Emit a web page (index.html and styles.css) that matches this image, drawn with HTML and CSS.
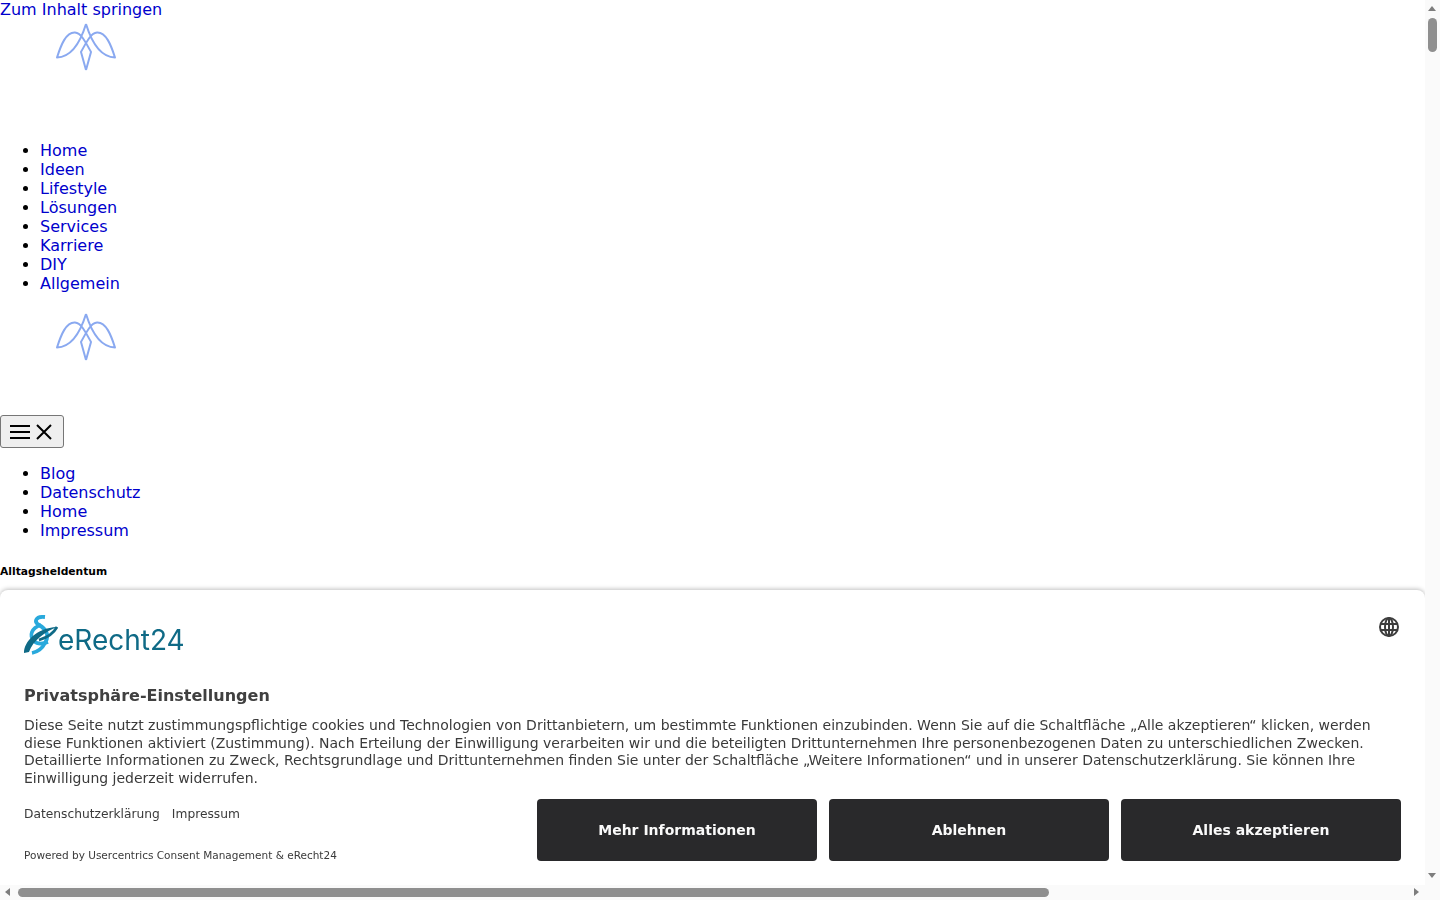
FILE: index.html
```html
<!DOCTYPE html>
<html lang="de">
<head>
    <meta charset="UTF-8">
    <meta name="viewport" content="width=device-width, initial-scale=1.0">
    <title>Alltagsheldentum</title>
    <link rel="stylesheet" href="styles.css">
</head>
<body>
    <a class="skip-link" href="#inhalt">Zum Inhalt springen</a>

    <a class="site-logo" href="#">
        <svg width="172" height="106" viewBox="0 0 172 106" fill="none" stroke="#8aa9f0" stroke-width="2" stroke-linejoin="round">
            <path d="M86 5 C82 18 74 38 57 38.5 C61 26 66 13 75 13.5 C81 14 85 22 91 33 L86 51"/>
            <path d="M86 5 C90 18 98 38 115 38.5 C111 26 106 13 97 13.5 C91 14 87 22 81 33 L86 51"/>
        </svg>
    </a>

    <ul>
        <li><a href="#">Home</a></li>
        <li><a href="#">Ideen</a></li>
        <li><a href="#">Lifestyle</a></li>
        <li><a href="#">Lösungen</a></li>
        <li><a href="#">Services</a></li>
        <li><a href="#">Karriere</a></li>
        <li><a href="#">DIY</a></li>
        <li><a href="#">Allgemein</a></li>
    </ul>

    <a class="site-logo" href="#">
        <svg width="172" height="106" viewBox="0 0 172 106" fill="none" stroke="#8aa9f0" stroke-width="2" stroke-linejoin="round">
            <path d="M86 5 C82 18 74 38 57 38.5 C61 26 66 13 75 13.5 C81 14 85 22 91 33 L86 51"/>
            <path d="M86 5 C90 18 98 38 115 38.5 C111 26 106 13 97 13.5 C91 14 87 22 81 33 L86 51"/>
        </svg>
    </a>

    <button class="menu-toggle" aria-label="Menü">
        <svg width="22" height="16" viewBox="0 0 22 16" stroke="#000" stroke-width="2">
            <path d="M1 2 H21 M1 8 H21 M1 14 H21"/>
        </svg>
        <svg width="16" height="16" viewBox="0 0 16 16" stroke="#000" stroke-width="2">
            <path d="M1 1 L15 15 M15 1 L1 15"/>
        </svg>
    </button>

    <ul>
        <li><a href="#">Blog</a></li>
        <li><a href="#">Datenschutz</a></li>
        <li><a href="#">Home</a></li>
        <li><a href="#">Impressum</a></li>
    </ul>

    <h6 id="inhalt">Alltagsheldentum</h6>

    <div class="consent">
        <div class="consent-head">
            <div class="brand">
                <svg width="34" height="40" viewBox="0 0 34 40" fill="none">
                    <path d="M21 2 C11 1 10 7 15 10 C22 14 26 20 21 28 C18 34 13 37 8 38" stroke="#29a9dc" stroke-width="3.8"/>
                    <path d="M17 10 C7 13 5 21 10 26 C14 30 19 29 24 27" stroke="#29a9dc" stroke-width="3.6"/>
                    <path d="M0 38 C0 27 12 13 33 12 C21 17 9 25 5 37 Z" fill="#0f6a86"/>
                    <path d="M33 12 C29 20 22 23 15 25" stroke="#0f6a86" stroke-width="2.8"/>
                </svg>
                <span class="brand-name">eRecht24</span>
            </div>
            <svg class="globe" width="20" height="20" viewBox="0 0 20 20" fill="none" stroke="#3d3d3d" stroke-width="2">
                <circle cx="10" cy="10" r="9"/>
                <ellipse cx="10" cy="10" rx="4" ry="9"/>
                <path d="M1.5 7 H18.5 M1.5 13 H18.5 M10 1 V19"/>
            </svg>
        </div>

        <h2 class="consent-title">Privatsphäre-Einstellungen</h2>
        <p class="consent-text">Diese Seite nutzt zustimmungspflichtige cookies und Technologien von Drittanbietern, um bestimmte Funktionen einzubinden. Wenn Sie auf die Schaltfläche „Alle akzeptieren“ klicken, werden diese Funktionen aktiviert (Zustimmung). Nach Erteilung der Einwilligung verarbeiten wir und die beteiligten Drittunternehmen Ihre personenbezogenen Daten zu unterschiedlichen Zwecken. Detaillierte Informationen zu Zweck, Rechtsgrundlage und Drittunternehmen finden Sie unter der Schaltfläche „Weitere Informationen“ und in unserer Datenschutzerklärung. Sie können Ihre Einwilligung jederzeit widerrufen.</p>

        <div class="consent-foot">
            <div class="consent-info">
                <div class="consent-links">
                    <a href="#">Datenschutzerklärung</a>
                    <a href="#">Impressum</a>
                </div>
                <p class="powered">Powered by Usercentrics Consent Management &amp; eRecht24</p>
            </div>
            <div class="consent-buttons">
                <button class="consent-btn">Mehr Informationen</button>
                <button class="consent-btn">Ablehnen</button>
                <button class="consent-btn">Alles akzeptieren</button>
            </div>
        </div>
    </div>

    <!-- scrollbars of the window -->
    <div class="scroll-v">
        <span class="arrow arrow-up"></span>
        <span class="thumb-v"></span>
        <span class="arrow arrow-down"></span>
    </div>
    <div class="scroll-h">
        <span class="arrow arrow-left"></span>
        <span class="thumb-h"></span>
        <span class="arrow arrow-right"></span>
    </div>
</body>
</html>
```

FILE: styles.css
```css
html, body {
    overflow: hidden;
}
body {
    margin: 0;
    height: 900px;
    font-family: "DejaVu Sans", sans-serif;
    background: #fff;
    color: #000;
}
a {
    color: #0000cc;
    text-decoration: none;
}
.skip-link {
    display: block;
}
.site-logo {
    display: block;
    height: 106px;
}
.site-logo svg {
    display: block;
}
ul {
    margin: 16px 0;
    padding-left: 40px;
}
.menu-toggle {
    display: flex;
    align-items: center;
    gap: 5px;
    box-sizing: border-box;
    width: 64px;
    height: 33px;
    padding: 0 8px;
    background: #efefef;
    border: 1px solid #767676;
    border-radius: 3px;
}
h6 {
    margin: 25px 0;
    font-size: 10.72px;
}

.consent {
    position: fixed;
    left: 0;
    bottom: 15px;
    box-sizing: border-box;
    width: 1425px;
    height: 295px;
    padding: 24px 24px 0;
    background: #fff;
    border-radius: 8px 8px 0 0;
    box-shadow: 0 -1px 4px rgba(0, 0, 0, 0.25);
    color: #3a3a3a;
}
.consent-head {
    display: flex;
    justify-content: space-between;
    align-items: flex-start;
    height: 46px;
}
.brand {
    display: flex;
    align-items: flex-end;
    height: 40px;
    margin-top: 1px;
}
.brand-name {
    font-family: "Inter", sans-serif;
    font-size: 28px;
    font-weight: 400;
    line-height: 29px;
    color: #0f6a86;
}
.globe {
    margin: 3px 2px 0 0;
}
.consent-title {
    margin: 26px 0 0;
    font-size: 16px;
    line-height: 19px;
    color: #404040;
}
.consent-text {
    margin: 12px 0 0;
    font-size: 14px;
    line-height: 17.5px;
}
.consent-foot {
    display: flex;
    justify-content: space-between;
    margin-top: 12px;
}
.consent-links {
    display: flex;
    gap: 12px;
    margin-top: 8px;
    font-size: 12.25px;
    line-height: 15px;
}
.consent-links a {
    color: #3a3a3a;
}
.powered {
    margin: 26px 0 0;
    font-size: 10.5px;
    line-height: 14px;
}
.consent-buttons {
    display: flex;
    gap: 12px;
}
.consent-btn {
    width: 280px;
    height: 62px;
    background: #29292b;
    border: 0;
    border-radius: 4px;
    color: #fafafa;
    font-family: "DejaVu Sans", sans-serif;
    font-size: 14px;
    font-weight: 700;
}

.scroll-v {
    position: fixed;
    top: 0;
    right: 0;
    width: 15px;
    height: 885px;
    background: #fafafa;
}
.thumb-v {
    position: absolute;
    top: 18px;
    left: 3px;
    width: 9px;
    height: 34px;
    background: #8f8f8f;
    border-radius: 5px;
}
.scroll-h {
    position: fixed;
    left: 0;
    bottom: 0;
    width: 100%;
    height: 15px;
    background: #fafafa;
}
.thumb-h {
    position: absolute;
    top: 3px;
    left: 18px;
    width: 1031px;
    height: 9px;
    background: #8f8f8f;
    border-radius: 5px;
}
.arrow {
    position: absolute;
    width: 0;
    height: 0;
    border: 4px solid transparent;
}
.arrow-up {
    top: 2px;
    left: 3px;
    border-bottom: 5px solid #7d7d7d;
}
.arrow-down {
    bottom: 3px;
    left: 3px;
    border-top: 5px solid #7d7d7d;
}
.arrow-left {
    top: 3px;
    left: 1px;
    border-right: 5px solid #7d7d7d;
}
.arrow-right {
    top: 3px;
    right: 17px;
    border-left: 5px solid #7d7d7d;
}
```
